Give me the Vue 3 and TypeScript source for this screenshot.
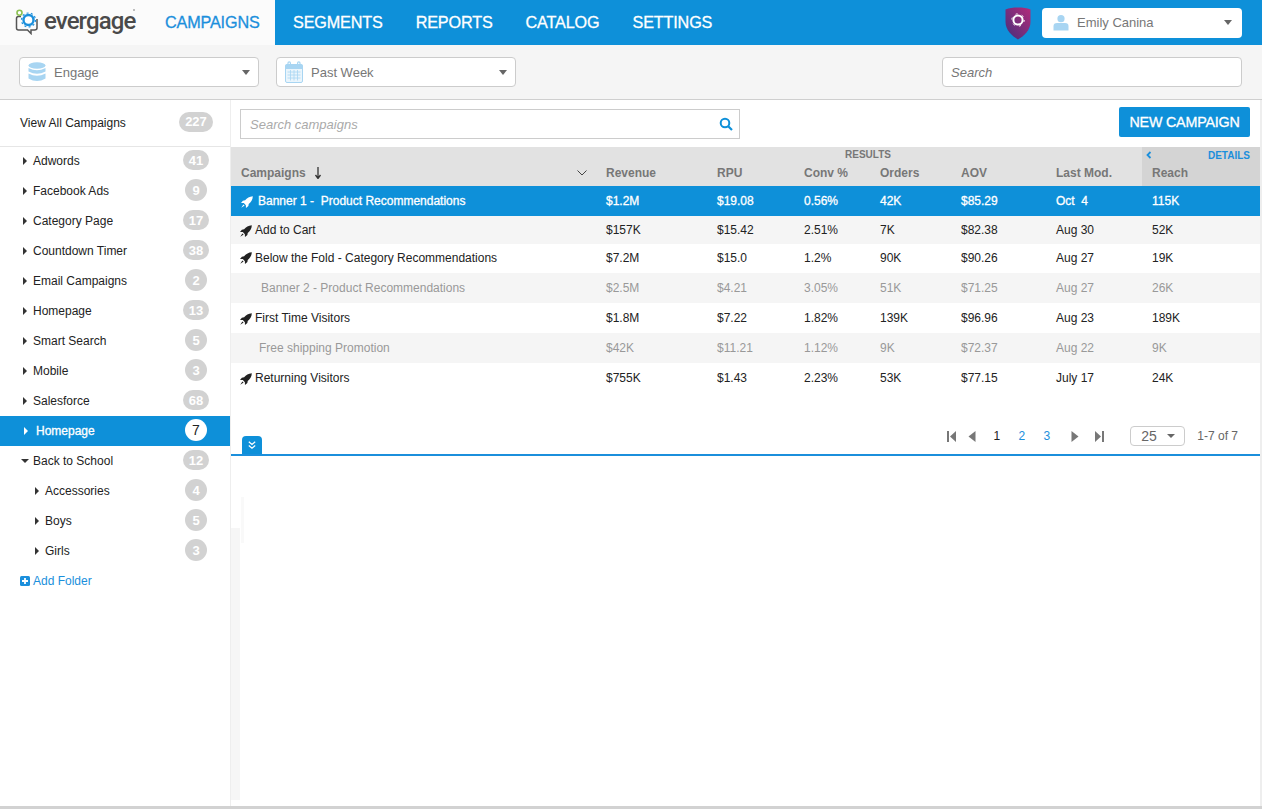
<script setup lang="ts">
const navItems = ['SEGMENTS', 'REPORTS', 'CATALOG', 'SETTINGS']

interface Folder { name: string; count: number; level: number; open?: boolean; active?: boolean }
const folders: Folder[] = [
  { name: 'Adwords', count: 41, level: 0 },
  { name: 'Facebook Ads', count: 9, level: 0 },
  { name: 'Category Page', count: 17, level: 0 },
  { name: 'Countdown Timer', count: 38, level: 0 },
  { name: 'Email Campaigns', count: 2, level: 0 },
  { name: 'Homepage', count: 13, level: 0 },
  { name: 'Smart Search', count: 5, level: 0 },
  { name: 'Mobile', count: 3, level: 0 },
  { name: 'Salesforce', count: 68, level: 0 },
  { name: 'Homepage', count: 7, level: 0, active: true },
  { name: 'Back to School', count: 12, level: 0, open: true },
  { name: 'Accessories', count: 4, level: 1 },
  { name: 'Boys', count: 5, level: 1 },
  { name: 'Girls', count: 3, level: 1 },
]

const columns = ['Revenue', 'RPU', 'Conv %', 'Orders', 'AOV', 'Last Mod.']

interface Row { name: string; cells: string[]; kind: string; rocket: boolean }
const rows: Row[] = [
  { name: 'Banner 1 -  Product Recommendations', cells: ['$1.2M', '$19.08', '0.56%', '42K', '$85.29', 'Oct  4', '115K'], kind: 'selected', rocket: true },
  { name: 'Add to Cart', cells: ['$157K', '$15.42', '2.51%', '7K', '$82.38', 'Aug 30', '52K'], kind: 'alt h28', rocket: true },
  { name: 'Below the Fold - Category Recommendations', cells: ['$7.2M', '$15.0', '1.2%', '90K', '$90.26', 'Aug 27', '19K'], kind: 'h29', rocket: true },
  { name: 'Banner 2 - Product Recommendations', cells: ['$2.5M', '$4.21', '3.05%', '51K', '$71.25', 'Aug 27', '26K'], kind: 'alt muted banner2', rocket: false },
  { name: 'First Time Visitors', cells: ['$1.8M', '$7.22', '1.82%', '139K', '$96.96', 'Aug 23', '189K'], kind: '', rocket: true },
  { name: 'Free shipping Promotion', cells: ['$42K', '$11.21', '1.12%', '9K', '$72.37', 'Aug 22', '9K'], kind: 'alt muted', rocket: false },
  { name: 'Returning Visitors', cells: ['$755K', '$1.43', '2.23%', '53K', '$77.15', 'July 17', '24K'], kind: '', rocket: true },
]
</script>

<template>
  <div class="page">
    <header class="topbar">
      <div class="logo">
        <svg class="logo-mark" viewBox="0 0 26 26" width="26" height="26">
          <path d="M6 7.500H3.500Q1.500 7.500 1.500 9.500V19Q1.500 21 3.500 21H12.500L16 24.500V21H19.500Q22 21 22 19V10" fill="none" stroke="#555" stroke-width="1.500" />
          <circle cx="13.500" cy="11" r="5" fill="#fff" stroke="#1b8fdc" stroke-width="2.400" />
          <circle cx="13.500" cy="11" r="7" fill="none" stroke="#1b8fdc" stroke-width="1.200" stroke-dasharray="2 2.400" />
          <circle cx="4.500" cy="3.800" r="2.500" fill="#fff" stroke="#8cc152" stroke-width="1.600" />
        </svg>
        <span class="logo-text">evergage</span>
        <span class="logo-dot"></span>
      </div>
      <a class="nav-item nav-active">CAMPAIGNS</a>
      <nav class="nav">
        <a v-for="item in navItems" :key="item" class="nav-item">{{ item }}</a>
      </nav>
      <div class="top-right">
        <svg class="shield" viewBox="0 0 26 33" width="26" height="33">
          <defs>
            <linearGradient id="shieldGrad" x1="0" y1="1" x2="1" y2="0">
              <stop offset="0" stop-color="#43307c" />
              <stop offset="1" stop-color="#b42a7a" />
            </linearGradient>
          </defs>
          <path d="M13 .5C18 .5 22 1 25.500 2.500V15C25.500 23 19 29 13 32.500C7 29 .5 23 .5 15V2.500C4 1 8 .5 13 .5Z" fill="url(#shieldGrad)" />
          <circle cx="13" cy="13" r="4.600" fill="none" stroke="#fff" stroke-width="2" />
          <circle cx="13" cy="13" r="6.200" fill="none" stroke="#fff" stroke-width="1" stroke-dasharray="2 4.500" />
        </svg>
        <div class="user-select">
          <svg viewBox="0 0 16 16" width="16" height="17">
            <circle cx="8" cy="4.200" r="3.600" fill="#a8d5f2" />
            <path d="M.5 16V11.500Q.5 8.500 4 8.500H12Q15.500 8.500 15.500 11.500V16Z" fill="#a8d5f2" />
          </svg>
          <span class="user-name">Emily Canina</span>
          <span class="caret-down"></span>
        </div>
      </div>
    </header>

    <div class="toolbar">
      <div class="select engage">
        <svg viewBox="0 0 18 20" width="18" height="20">
          <ellipse cx="9" cy="3.500" rx="8.500" ry="3.200" fill="#a8d5f2" />
          <path d="M.5 6Q9 10.500 17.500 6V9.500Q9 14 .5 9.500Z" fill="#a8d5f2" />
          <path d="M.5 11.500Q9 16 17.500 11.500V16.500Q9 21.500 .5 16.500Z" fill="#a8d5f2" />
        </svg>
        <span>Engage</span>
        <span class="caret-down"></span>
      </div>
      <div class="select week">
        <svg viewBox="0 0 18 22" width="18" height="22">
          <rect x=".5" y="3.500" width="17" height="18" rx="1.500" fill="#eaf5fc" stroke="#a8d5f2" />
          <rect x=".5" y="3.500" width="17" height="4.500" fill="#a8d5f2" />
          <path d="M3 5.500V2Q3 .8 4.200 .8Q5.400 .8 5.400 2V5.500M12.600 5.500V2Q12.600 .8 13.800 .8Q15 .8 15 2V5.500" fill="none" stroke="#a8d5f2" stroke-width="1.200" />
          <path d="M2.500 11H15.500M2.500 14H15.500M2.500 17H15.500M5.500 9V19.500M9 9V19.500M12.500 9V19.500" stroke="#a8d5f2" stroke-width=".8" />
        </svg>
        <span>Past Week</span>
        <span class="caret-down"></span>
      </div>
      <div class="global-search">Search</div>
    </div>

    <div class="content">
      <aside class="sidebar">
        <div class="view-all">
          <span>View All Campaigns</span>
          <span class="badge wide">227</span>
        </div>
        <ul class="folders">
          <li
            v-for="(f, i) in folders"
            :key="i"
            class="folder"
            :class="{ active: f.active, sub: f.level === 1 }"
          >
            <span :class="f.open ? 'tri-down' : 'tri-right'"></span>
            <span class="folder-name">{{ f.name }}</span>
            <span class="badge" :class="{ round: f.count < 10 }">{{ f.count }}</span>
          </li>
        </ul>
        <div class="add-folder">
          <svg viewBox="0 0 10 10" width="10" height="10">
            <rect width="10" height="10" rx="1.500" fill="#1b8fdc" />
            <path d="M5 2V8M2 5H8" stroke="#fff" stroke-width="1.800" />
          </svg>
          <span>Add Folder</span>
        </div>
      </aside>

      <main class="main">
        <div class="actions">
          <div class="campaign-search">
            <span>Search campaigns</span>
            <svg viewBox="0 0 14 14" width="14" height="14">
              <circle cx="6" cy="6" r="4.300" fill="none" stroke="#0e90d9" stroke-width="2" />
              <path d="M9.200 9.200L13 13" stroke="#0e90d9" stroke-width="2.200" />
            </svg>
          </div>
          <button class="new-campaign">NEW CAMPAIGN</button>
        </div>

        <div class="table">
          <div class="thead">
            <div class="group-row grid">
              <div></div>
              <div class="results">RESULTS</div>
              <div class="details-cell">
                <svg viewBox="0 0 6 8" width="6" height="8">
                  <path d="M4.500 1L1.500 4L4.500 7" fill="none" stroke="#1b8fdc" stroke-width="1.800" />
                </svg>
                <span>DETAILS</span>
              </div>
            </div>
            <div class="col-row grid">
              <div class="col-name">
                <span>Campaigns</span>
                <svg class="sort" viewBox="0 0 8 12" width="8" height="12">
                  <path d="M4 0V10.500M1.500 8L4 11.500L6.500 8" fill="none" stroke="#333" stroke-width="1.300" />
                </svg>
                <svg class="chev" viewBox="0 0 10 6" width="10" height="6">
                  <path d="M.5 .5L5 5L9.500 .5" fill="none" stroke="#444" stroke-width="1" />
                </svg>
              </div>
              <div v-for="c in columns" :key="c" class="col">{{ c }}</div>
              <div class="col reach">Reach</div>
            </div>
          </div>
          <div v-for="r in rows" :key="r.name" class="row grid" :class="r.kind">
            <div class="name-cell">
              <svg v-if="r.rocket" class="rocket" viewBox="0 0 14 14" width="12" height="12">
                <path d="M13.800 .2C9.800 .4 7 2.300 4.800 5L2.200 5.400L0 8.200L3.300 8.300L5.700 10.700L5.800 14L8.600 11.800L9 9.200C11.700 7 13.600 4.200 13.800 .2Z" fill="currentColor" />
                <path d="M2.800 9.800L.3 13.700L4.200 11.200Z" fill="currentColor" />
              </svg>
              <span class="name-text">{{ r.name }}</span>
            </div>
            <div v-for="(c, i) in r.cells" :key="i" class="cell">{{ c }}</div>
          </div>
        </div>

        <div class="pager-row">
          <div class="pager">
            <svg class="p-first" viewBox="0 0 9 10" width="9" height="11" preserveAspectRatio="none"><path d="M0 0H2V10H0ZM9 0V10L3 5Z" fill="#777" /></svg>
            <svg class="p-prev" viewBox="0 0 8 10" width="8" height="11" preserveAspectRatio="none"><path d="M7.500 0V10L.5 5Z" fill="#777" /></svg>
            <span class="page-num current">1</span>
            <span class="page-num">2</span>
            <span class="page-num">3</span>
            <svg class="p-next" viewBox="0 0 8 10" width="8" height="11" preserveAspectRatio="none"><path d="M.5 0V10L7.500 5Z" fill="#777" /></svg>
            <svg class="p-last" viewBox="0 0 9 10" width="9" height="11" preserveAspectRatio="none"><path d="M9 0H7V10H9ZM0 0V10L6 5Z" fill="#777" /></svg>
            <div class="page-size">
              <span>25</span>
              <span class="caret-down small"></span>
            </div>
            <span class="page-range">1-7 of 7</span>
          </div>
        </div>
        <div class="tab-line">
          <div class="collapse-tab">
            <svg viewBox="0 0 8 9" width="8" height="9">
              <path d="M.8 .8L4 3.500L7.200 .8M.8 4.500L4 7.200L7.200 4.500" fill="none" stroke="#fff" stroke-width="1.200" />
            </svg>
          </div>
        </div>
        <div class="detail-pane">
          <div class="gutter"></div>
        </div>
      </main>
    </div>
  </div>
</template>

<style>
html, body { margin: 0; background: #fff; overflow: hidden; }
</style>

<style scoped>
.page {
  width: 1262px;
  height: 809px;
  display: flex;
  flex-direction: column;
  font-family: "Liberation Sans", Arial, sans-serif;
  font-size: 12px;
  color: #222;
  overflow: hidden;
  border-bottom: 3px solid #d2d2d2;
  box-sizing: border-box;
}
.topbar {
  height: 45px;
  flex: none;
  display: flex;
  align-items: stretch;
  background: #0e90d9;
}
.logo {
  width: 150px;
  box-sizing: border-box;
  background: #fbfbfb;
  position: relative;
  display: flex;
  align-items: center;
  padding-left: 15px;
}
.logo-mark { flex: none; margin-top: -1px; }
.logo-text {
  font-family: Roboto, sans-serif;
  font-weight: 500;
  font-size: 24px;
  letter-spacing: -.9px;
  color: #4a4a4a;
  margin-left: 3px;
  margin-top: -3px;
}
.logo-dot {
  position: absolute;
  left: 133px;
  top: 9px;
  width: 2px;
  height: 2px;
  border-radius: 50%;
  background: #aaa;
}
.nav { display: flex; align-items: center; gap: 33px; padding-left: 18px; }
.nav-item {
  font-size: 16.200px;
  color: #fff;
  line-height: 45px;
  letter-spacing: -.15px;
  -webkit-text-stroke: .3px currentColor;
}
.nav-active {
  width: 125px;
  box-sizing: border-box;
  padding-left: 15px;
  background: #fbfbfb;
  color: #1b8fdc;
}
.top-right {
  margin-left: auto;
  display: flex;
  align-items: center;
  gap: 11px;
  padding-right: 20px;
}
.shield { margin-top: 1px; }
.user-select {
  width: 200px;
  height: 30px;
  background: #fff;
  border-radius: 4px;
  display: flex;
  align-items: center;
  padding: 0 10px 0 11px;
  box-sizing: border-box;
  font-size: 13px;
  color: #777;
}
.user-name { margin-left: 8px; }
.caret-down {
  margin-left: auto;
  width: 0;
  height: 0;
  border-left: 4.500px solid transparent;
  border-right: 4.500px solid transparent;
  border-top: 5px solid #666;
}
.caret-down.small {
  border-left-width: 4px;
  border-right-width: 4px;
  border-top-width: 4px;
}
.toolbar {
  height: 55px;
  flex: none;
  box-sizing: border-box;
  background: #f5f5f5;
  border-bottom: 1px solid #cfcfcf;
  display: flex;
  align-items: center;
  padding: 0 20px 0 19px;
  gap: 17px;
}
.select {
  width: 240px;
  height: 30px;
  box-sizing: border-box;
  background: #fff;
  border: 1px solid #ccc;
  border-radius: 4px;
  display: flex;
  align-items: center;
  padding: 0 8px;
  gap: 8px;
  font-size: 13px;
  color: #777;
}
.select svg { flex: none; }
.global-search {
  width: 300px;
  height: 30px;
  box-sizing: border-box;
  margin-left: auto;
  background: #fff;
  border: 1px solid #ccc;
  border-radius: 4px;
  display: flex;
  align-items: center;
  padding-left: 8px;
  font-size: 13px;
  font-style: italic;
  color: #777;
}
.content { flex: 1; display: flex; min-height: 0; }
.sidebar {
  width: 231px;
  flex: none;
  box-sizing: border-box;
  border-right: 1px solid #eee;
}
.view-all {
  height: 47px;
  box-sizing: border-box;
  border-bottom: 1px solid #e6e6e6;
  display: flex;
  align-items: center;
  justify-content: space-between;
  padding: 0 17px 1px 20px;
}
.badge {
  width: 26px;
  height: 20px;
  border-radius: 10px;
  background: #d2d2d2;
  color: #fff;
  font-size: 13px;
  font-weight: 700;
  display: flex;
  align-items: center;
  justify-content: center;
  flex: none;
  margin-top: -2px;
}
.badge.wide { width: 34px; }
.badge.round { width: 22px; height: 22px; border-radius: 50%; margin-right: 2px; }
.folders { list-style: none; margin: -1px 0 0; padding: 0; }
.folder {
  height: 30px;
  display: flex;
  align-items: center;
  padding: 0 21px 0 23px;
}
.folder.sub { padding-left: 35px; }
.folder.active {
  background: #0e90d9;
  color: #fff;
  padding-left: 24px;
  -webkit-text-stroke: .3px #fff;
}
.folder.active .tri-right { border-left-color: #fff; }
.folder.active .folder-name { margin-left: 8px; }
.folder.active .badge {
  background: #fff;
  color: #222;
  font-weight: 400;
  font-size: 14px;
  -webkit-text-stroke: 0;
}
.tri-right {
  width: 0;
  height: 0;
  border-top: 4px solid transparent;
  border-bottom: 4px solid transparent;
  border-left: 4.500px solid #333;
  margin-top: -1px;
}
.tri-down {
  width: 0;
  height: 0;
  margin-left: -2px;
  border-left: 4px solid transparent;
  border-right: 4px solid transparent;
  border-top: 4.500px solid #333;
}
.folder-name { margin-left: 6px; }
.tri-down + .folder-name { margin-left: 4px; }
.folder .badge { margin-left: auto; }
.add-folder {
  height: 30px;
  display: flex;
  align-items: center;
  gap: 3px;
  padding-left: 20px;
  color: #1b8fdc;
}
.main {
  width: 1029px;
  flex: none;
  display: flex;
  flex-direction: column;
  border-right: 2px solid #eee;
}
.actions {
  height: 47px;
  flex: none;
  display: flex;
  justify-content: space-between;
  padding: 7px 10px 0 9px;
  box-sizing: border-box;
}
.campaign-search {
  width: 500px;
  height: 30px;
  margin-top: 2px;
  box-sizing: border-box;
  border: 1px solid #ccc;
  display: flex;
  align-items: center;
  justify-content: space-between;
  padding: 0 6px 0 9px;
  font-size: 13px;
  font-style: italic;
  color: #aaa;
}
.new-campaign {
  width: 131px;
  height: 30px;
  border: none;
  border-radius: 2px;
  background: #0e90d9;
  color: #fff;
  font-family: inherit;
  font-size: 14.300px;
  letter-spacing: -.2px;
  -webkit-text-stroke: .3px #fff;
  padding: 0;
}
.grid {
  display: grid;
  grid-template-columns: 375px 111px 87px 76px 81px 95px 86px 1fr;
}
.thead { background: #e2e2e2; height: 39px; color: #777; font-weight: 700; }
.group-row { height: 14px; }
.group-row > .results {
  grid-column: 2 / 8;
  text-align: center;
  padding-right: 12px;
  font-size: 10px;
  line-height: 16px;
  color: #777;
}
.details-cell {
  background: #d4d4d4;
  display: flex;
  justify-content: space-between;
  align-items: center;
  padding: 0 10px 0 4px;
  font-size: 10px;
  color: #1b8fdc;
}
.col-row { height: 25px; }
.col, .col-name { display: flex; align-items: center; padding-bottom: 2px; }
.col-name { padding-left: 10px; position: relative; }
.sort { margin-left: 8px; }
.chev { position: absolute; left: 346px; top: 9px; }
.reach { background: #d4d4d4; padding-left: 10px; }
.row { height: 30px; align-items: center; }
.row.h28 { height: 28px; }
.row.h29 { height: 29px; padding-bottom: 2px; box-sizing: border-box; }
.row.alt { background: #f5f5f5; }
.row.muted { color: #999; }
.row.selected {
  background: #0e90d9;
  color: #fff;
  -webkit-text-stroke: .3px #fff;
}
.cell { white-space: pre; }
.cell:last-child { padding-left: 10px; }
.name-cell { display: flex; align-items: center; padding-left: 9px; }
.rocket { flex: none; margin-right: 3px; margin-top: 1px; }
.row.selected .rocket { margin-left: 1px; margin-right: 5px; }
.row.muted .name-cell { padding-left: 28px; }
.row.banner2 .name-cell { padding-left: 30px; }
.name-text { white-space: pre; }
.pager-row {
  height: 61px;
  flex: none;
  display: flex;
  justify-content: flex-end;
  align-items: flex-end;
  padding: 0 22px 8px 0;
  box-sizing: border-box;
}
.pager { display: flex; align-items: center; }
.p-prev { margin-left: 12px; }
.page-num { color: #1b8fdc; width: 25px; text-align: center; }
.page-num.current { color: #222; margin-left: 8px; }
.p-next { margin-left: 12px; }
.p-last { margin-left: 16px; }
.page-size {
  width: 55px;
  height: 20px;
  box-sizing: border-box;
  margin-left: 26px;
  border: 1px solid #ccc;
  border-radius: 4px;
  display: flex;
  align-items: center;
  padding: 0 9px 0 10px;
  font-size: 14px;
  color: #666;
}
.page-range { margin-left: 12px; color: #666; }
.tab-line {
  height: 2px;
  flex: none;
  background: #1b8fdc;
  position: relative;
}
.collapse-tab {
  position: absolute;
  left: 11px;
  bottom: 2px;
  width: 20px;
  height: 18px;
  background: #0e90d9;
  border-radius: 4px 4px 0 0;
  display: flex;
  align-items: center;
  justify-content: center;
}
.detail-pane { flex: 1; position: relative; min-height: 0; }
.gutter {
  position: absolute;
  left: 0;
  top: 72px;
  bottom: 6px;
  width: 9px;
  background: #f6f6f6;
}
.gutter::before {
  content: "";
  position: absolute;
  left: 10px;
  top: -31px;
  width: 3px;
  height: 46px;
  background: #f9f9f9;
}
</style>
